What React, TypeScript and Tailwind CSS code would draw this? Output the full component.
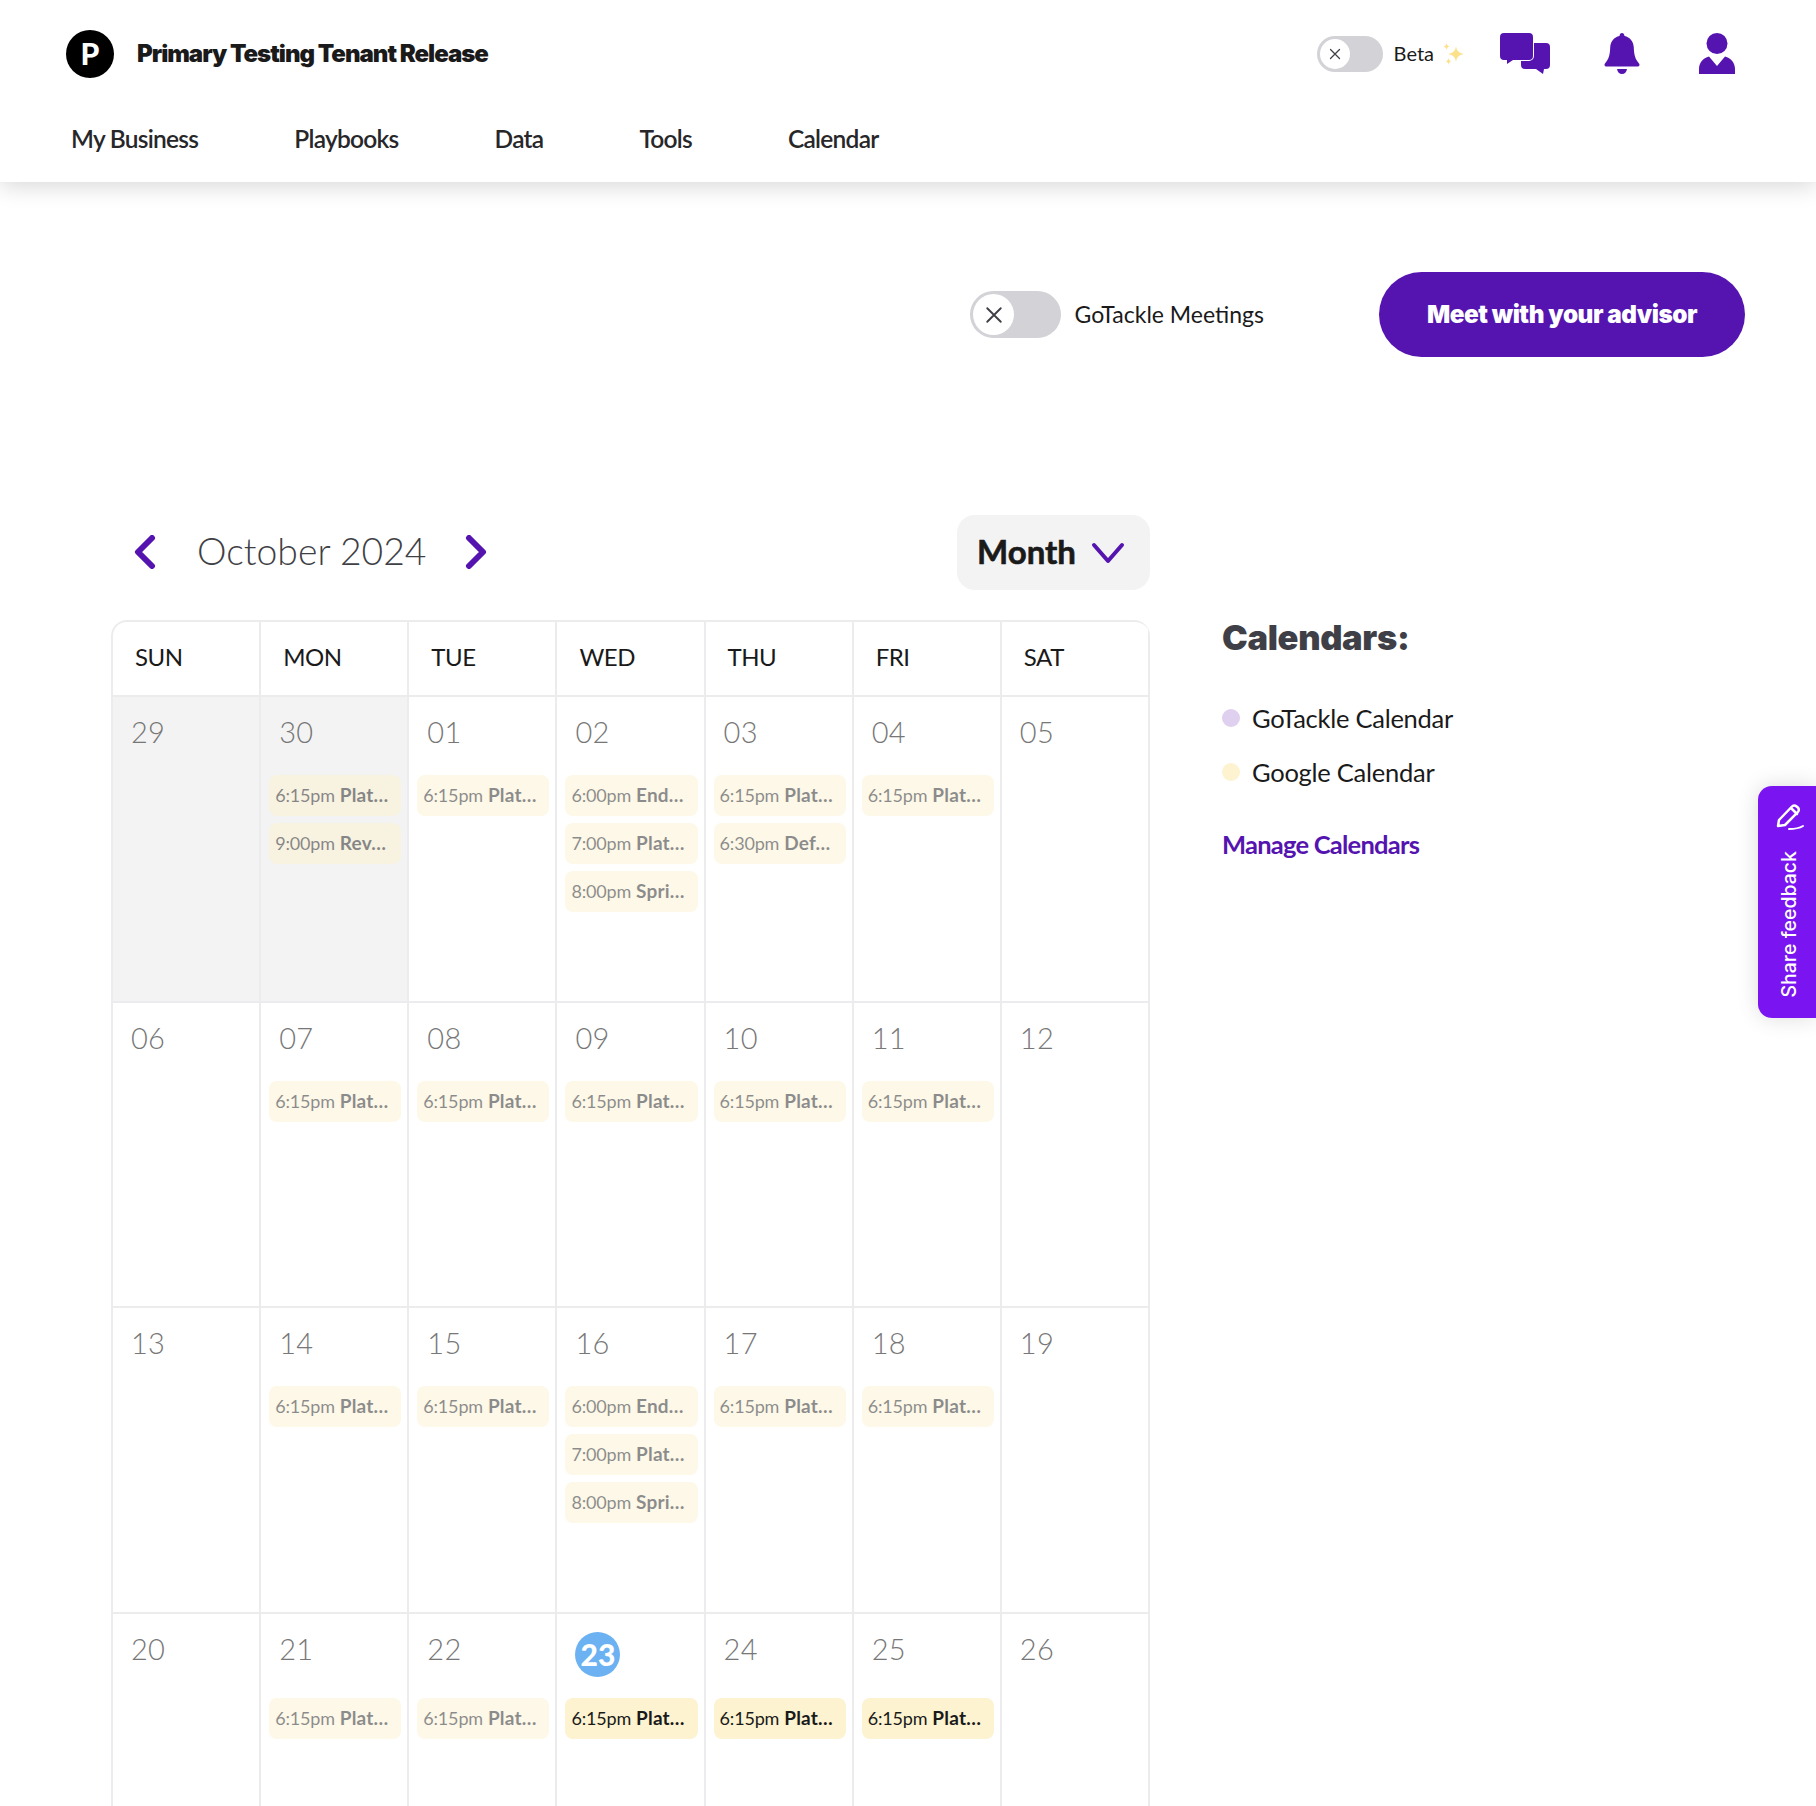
type Ev = { time: string; label: string };
type Day = { n: string; events?: Ev[]; muted?: boolean; today?: boolean; live?: boolean };

const plat: Ev = { time: "6:15pm", label: "Plat…" };
const wed: Ev[] = [
  { time: "6:00pm", label: "End…" },
  { time: "7:00pm", label: "Plat…" },
  { time: "8:00pm", label: "Spri…" },
];

const weeks: Day[][] = [
  [
    { n: "29", muted: true },
    { n: "30", muted: true, events: [plat, { time: "9:00pm", label: "Rev…" }] },
    { n: "01", events: [plat] },
    { n: "02", events: wed },
    { n: "03", events: [plat, { time: "6:30pm", label: "Def…" }] },
    { n: "04", events: [plat] },
    { n: "05" },
  ],
  [
    { n: "06" },
    { n: "07", events: [plat] },
    { n: "08", events: [plat] },
    { n: "09", events: [plat] },
    { n: "10", events: [plat] },
    { n: "11", events: [plat] },
    { n: "12" },
  ],
  [
    { n: "13" },
    { n: "14", events: [plat] },
    { n: "15", events: [plat] },
    { n: "16", events: wed },
    { n: "17", events: [plat] },
    { n: "18", events: [plat] },
    { n: "19" },
  ],
  [
    { n: "20" },
    { n: "21", events: [plat] },
    { n: "22", events: [plat] },
    { n: "23", today: true, live: true, events: [plat] },
    { n: "24", live: true, events: [plat] },
    { n: "25", live: true, events: [plat] },
    { n: "26" },
  ],
];

const dayNames = ["SUN", "MON", "TUE", "WED", "THU", "FRI", "SAT"];
const navItems = ["My Business", "Playbooks", "Data", "Tools", "Calendar"];

function CloseIcon({ size, width }: { size: number; width: number }) {
  return (
    <svg width={size} height={size} viewBox="0 0 24 24" fill="none" stroke="#3f3f46" strokeWidth={width} strokeLinecap="round">
      <path d="M3 3l18 18M21 3L3 21" />
    </svg>
  );
}

function ChatIcon() {
  return (
    <svg width="51" height="41" viewBox="0 0 51 41" fill="#5514b0">
      <path d="M25 10h21a4 4 0 0 1 4 4v18a4 4 0 0 1-4 4h-2l-1 5-7-5H25a4 4 0 0 1-4-4V14a4 4 0 0 1 4-4z" />
      <path
        d="M4 0h25a4 4 0 0 1 4 4v19a4 4 0 0 1-4 4H13l-6 4v-4H4a4 4 0 0 1-4-4V4a4 4 0 0 1 4-4z"
        stroke="#fff"
        strokeWidth="2"
        paintOrder="stroke"
      />
    </svg>
  );
}

function BellIcon() {
  return (
    <svg width="36" height="41" viewBox="0 0 36 41" fill="#5514b0">
      <path d="M18 0c1.400 0 2.300 1 2.500 3 5.500 1.200 9 5.500 9.300 11.500.3 7 1 11 5.400 16.300.7 1 .2 2.700-1.400 2.700H2.200C.6 33.500.1 31.800.8 30.800 5.200 25.500 5.900 21.500 6.200 14.500 6.500 8.500 10 4.200 15.500 3c.2-2 1.100-3 2.500-3z" />
      <path d="M13 36h10c-.4 3-2.400 5-5 5s-4.600-2-5-5z" />
    </svg>
  );
}

function PersonIcon() {
  return (
    <svg width="36" height="41" viewBox="0 0 36 41" fill="#5514b0">
      <circle cx="18" cy="10.500" r="10.500" />
      <path d="M0 41v-5c0-6 4-11 10-12.500L18 33l8-9.500c6 1.500 10 6.500 10 12.500v5z" />
    </svg>
  );
}

function Sparkles() {
  return (
    <svg width="22" height="22" viewBox="0 0 22 22" fill="#fde08a">
      <path d="M13 3c.6 4.500 2.500 6.900 8 8-5.500 1.100-7.400 3.500-8 8-.6-4.500-2.500-6.900-8-8 5.500-1.100 7.400-3.500 8-8z" />
      <path d="M3.500 0c.3 2 1 3 3 3.500-2 .5-2.700 1.500-3 3.500-.3-2-1-3-3-3.500 2-.5 2.700-1.500 3-3.500z" />
      <path d="M5.500 15c.2 1.500.8 2.300 2.500 3.500-1.700.5-2.300 1.500-2.500 3.500-.2-2-.8-3-2.500-3.500 1.700-1.200 2.300-2 2.500-3.500z" />
    </svg>
  );
}

function PenIcon() {
  return (
    <svg width="28" height="27" viewBox="0 0 28 27" fill="none" stroke="#fff" strokeWidth="2.500" strokeLinecap="round" strokeLinejoin="round">
      <path d="M2 23l1-6L16 3.500a3 3 0 0 1 4.300-.3l1.500 1.300a3 3 0 0 1 .2 4.300L9 22z" />
      <path d="M15 5l6 6" />
      <path d="M13 26c5 0 10-.6 14-3" strokeWidth="2" />
    </svg>
  );
}

function EventChip({ ev, live }: { ev: Ev; live?: boolean }) {
  return (
    <div
      className={
        "flex h-[41px] items-center gap-[5px] overflow-hidden whitespace-nowrap rounded-[8px] bg-[#fdf3d0] pl-[6px] text-[#1a1a1a]" +
        (live ? "" : " opacity-50")
      }
    >
      <span className="text-[18px] font-normal tracking-[-0.01em]">{ev.time}</span>
      <span className="text-[19px] font-bold tracking-[0.01em]">{ev.label}</span>
    </div>
  );
}

function DayCell({ day, tall }: { day: Day; tall: boolean }) {
  return (
    <div className={"border-r-2 border-[#ececee] pl-2 pr-[6px]" + (day.muted ? " bg-[#f3f3f3]" : "")}>
      <div className={tall ? "h-[84px]" : "h-[78px]"}>
        {day.today ? (
          <div className="pl-[10px] pt-[18px]">
            <div className="flex h-[45px] w-[45px] items-center justify-center rounded-full bg-[#6cb2f2] text-[30px] font-black text-white">
              {day.n}
            </div>
          </div>
        ) : (
          <div className="pl-[10px] pt-[15px] text-[29px] leading-[40px] font-light tracking-[0.01em] text-[#777]">{day.n}</div>
        )}
      </div>
      <div className="flex flex-col gap-[7px]">
        {day.events?.map((ev, i) => (
          <EventChip key={i} ev={ev} live={day.live} />
        ))}
      </div>
    </div>
  );
}

export default function App() {
  return (
    <div className="relative h-[1806px] overflow-hidden bg-white font-['Lato',sans-serif] text-[#1a1a1a]">
      {/* top bar */}
      <header className="relative h-[182px] bg-white shadow-[0_4px_22px_rgba(0,0,0,0.16)]">
        <div className="flex h-[107px] items-center justify-between pl-[66px] pr-[81px]">
          <div className="flex items-center gap-[23px]">
            <div className="flex h-[48px] w-[48px] items-center justify-center rounded-full bg-black text-[30px] font-black text-white">P</div>
            <span className="font-['Inter',sans-serif] text-[24px] font-black tracking-[-0.042em]">Primary Testing Tenant Release</span>
          </div>
          <div className="flex items-center">
            <div className="flex h-[36px] w-[66px] items-center rounded-full bg-[#d2d2d7] pl-[3px]">
              <div className="flex h-[30px] w-[30px] items-center justify-center rounded-full bg-white">
                <CloseIcon size={12} width={2.500} />
              </div>
            </div>
            <span className="ml-[11px] pb-[2px] text-[20px] font-normal">Beta</span>
            <span className="ml-[9px]">
              <Sparkles />
            </span>
            <span className="ml-[35px]">
              <ChatIcon />
            </span>
            <span className="ml-[53px]">
              <BellIcon />
            </span>
            <span className="ml-[59px]">
              <PersonIcon />
            </span>
          </div>
        </div>
        <nav className="flex h-[64px] items-center gap-[96px] pl-[71px]">
          {navItems.map((item) => (
            <span key={item} className="text-[24.500px] font-semibold tracking-[-0.03em] text-[#27272a]">
              {item}
            </span>
          ))}
        </nav>
      </header>

      {/* meetings toggle + advisor button */}
      <div className="flex items-center justify-end pr-[71px] pt-[90px]">
        <div className="flex h-[47px] w-[91px] items-center rounded-full bg-[#d2d2d7] pl-[3px]">
          <div className="flex h-[41px] w-[41px] items-center justify-center rounded-full bg-white">
            <CloseIcon size={18} width={2.500} />
          </div>
        </div>
        <span className="ml-[13px] text-[23px] font-normal">GoTackle Meetings</span>
        <button className="ml-[115px] h-[85px] w-[366px] rounded-full bg-[#5514b0] font-['Inter',sans-serif] text-[24.300px] font-black tracking-[-0.02em] text-white">
          Meet with your advisor
        </button>
      </div>

      {/* calendar + sidebar */}
      <div className="flex gap-[72px] pl-[111px] pt-[158px]">
        <div className="w-[1039px] shrink-0">
          <div className="flex h-[75px] items-center justify-between">
            <div className="flex items-center">
              <svg className="ml-[23px]" width="22" height="34" viewBox="0 0 22 34" fill="none" stroke="#5514b0" strokeWidth="6" strokeLinecap="round" strokeLinejoin="round">
                <path d="M18 3L4 17l14 14" />
              </svg>
              <span className="ml-[41px] pb-[3px] text-[37.300px] font-light leading-none text-[#3f3f46]">October 2024</span>
              <svg className="ml-[39px]" width="22" height="34" viewBox="0 0 22 34" fill="none" stroke="#5514b0" strokeWidth="6" strokeLinecap="round" strokeLinejoin="round">
                <path d="M4 3l14 14L4 31" />
              </svg>
            </div>
            <div className="flex h-[75px] w-[193px] items-center rounded-[18px] bg-[#f3f3f3] pl-[20px]">
              <span className="pb-[2px] text-[33px] font-bold [-webkit-text-stroke:0.6px_#1a1a1a]">Month</span>
              <svg className="ml-[15px]" width="34" height="22" viewBox="0 0 34 22" fill="none" stroke="#5514b0" strokeWidth="4" strokeLinecap="round" strokeLinejoin="round">
                <path d="M3 3l14 16L31 3" />
              </svg>
            </div>
          </div>

          <div className="mt-[30px] overflow-hidden rounded-tl-[16px] rounded-tr-[16px] border-l-2 border-t-2 border-[#ececee]">
            <div className="grid h-[75px] grid-cols-7 border-b-2 border-[#ececee]">
              {dayNames.map((name) => (
                <div key={name} className="flex items-center border-r-2 border-[#ececee] pb-[3px] pl-[22px] text-[24px] font-normal tracking-[-0.02em]">
                  {name}
                </div>
              ))}
            </div>
            {weeks.map((week, i) => (
              <div key={i} className="grid h-[305.500px] grid-cols-7 border-b-2 border-[#ececee]">
                {week.map((day) => (
                  <DayCell key={day.n} day={day} tall={i === 3} />
                ))}
              </div>
            ))}
          </div>
        </div>

        <aside className="pt-[103px]">
          <h2 className="font-['Inter',sans-serif] text-[34.500px] font-black leading-[40px] tracking-[-0.01em] text-[#3f3f48]">Calendars:</h2>
          <div className="mt-[43px] flex items-center gap-[12px]">
            <span className="h-[18px] w-[18px] rounded-full bg-[#dfd0f0]" />
            <span className="text-[25.500px] font-normal leading-[34px] tracking-[-0.01em]">GoTackle Calendar</span>
          </div>
          <div className="mt-[20px] flex items-center gap-[12px]">
            <span className="h-[18px] w-[18px] rounded-full bg-[#fdf3d0]" />
            <span className="text-[25.500px] font-normal leading-[34px] tracking-[-0.01em]">Google Calendar</span>
          </div>
          <a className="mt-[38px] block text-[25.500px] font-bold leading-[34px] tracking-[-0.03em] text-[#5514b0]">Manage Calendars</a>
        </aside>
      </div>

      {/* feedback tab */}
      <div className="absolute left-[1758px] top-[786px] flex h-[232px] w-[58px] flex-col items-center rounded-l-[14px] bg-[#7a14f0] pl-[5px] pt-[17px] shadow-[0_0_22px_rgba(0,0,0,0.14)]">
        <PenIcon />
        <span className="mt-[21px] rotate-180 font-['Inter',sans-serif] text-[19.500px] font-medium leading-none text-white [writing-mode:vertical-rl]">Share feedback</span>
      </div>
    </div>
  );
}
